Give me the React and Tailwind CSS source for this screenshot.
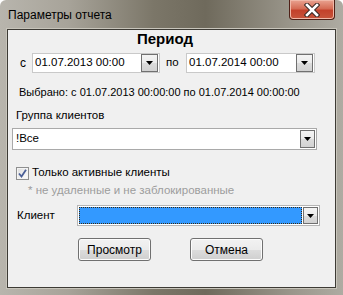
import React from 'react';

const font = { fontFamily: '"Liberation Sans", Arial, sans-serif' };

function DropButton({ className = '' }) {
  return (
    <div
      className={
        'flex items-center justify-center border border-[#707070] bg-[linear-gradient(180deg,#f4f4f4_0%,#ebebeb_50%,#dcdcdc_51%,#d2d2d2_100%)] ' +
        className
      }
    >
      <svg width="7" height="4" viewBox="0 0 7 4">
        <path d="M0 0H7L3.5 4Z" fill="#000" />
      </svg>
    </div>
  );
}

function DateCombo({ value, width }) {
  return (
    <div
      className="flex h-[20px] items-center border border-[#c9c9c9] bg-white pl-[1px] pr-[1px]"
      style={{ width }}
    >
      <span className="flex-1 pl-[1px] text-[11.5px] leading-none text-black">{value}</span>
      <DropButton className="h-[18px] w-[17px]" />
    </div>
  );
}

function WinButton({ children }) {
  return (
    <button className="flex h-[23px] w-[73px] items-center justify-center rounded-[3px] border border-[#707070] bg-[linear-gradient(180deg,#f2f2f2_0%,#ebebeb_50%,#dddddd_51%,#cfcfcf_100%)] text-[12px] text-black shadow-[inset_0_0_0_1px_#fcfcfc]">
      {children}
    </button>
  );
}

export default function App() {
  return (
    <div
      className="relative flex h-[295px] w-[343px] flex-col overflow-hidden rounded-t-[6px] bg-[linear-gradient(90deg,#b8b5ad_0%,#a7a399_20%,#7b7668_45%,#6f6a5c_60%,#9a968b_85%,#aeaba2_100%)]"
      style={font}
    >
      {/* title bar */}
      <div className="flex h-[29px] shrink-0 items-start">
        <div className="pl-[8px] pt-[8px] text-[12px] leading-[14px] text-black">Параметры отчета</div>
        <div className="flex-1" />
        <div className="mr-[8px] flex h-[20px] w-[46px] items-center justify-center rounded-b-[4px] border border-t-0 border-[#4f2017] bg-[linear-gradient(180deg,#e9a391_0%,#d56c55_45%,#c3412b_55%,#c7553c_100%)] shadow-[inset_0_0_0_1px_#f0b8a8]">
          <svg width="16" height="14" viewBox="0 0 16 14">
            <path d="M3 2L13 12M13 2L3 12" stroke="#3b2a26" strokeWidth="4.6" strokeLinecap="square" />
            <path d="M3 2L13 12M13 2L3 12" stroke="#ffffff" strokeWidth="2.6" strokeLinecap="square" />
          </svg>
        </div>
      </div>

      {/* client area */}
      <div className="ml-[7px] mr-[7px] h-[259px] border border-[#3d3b35] bg-[#f0f0f0] shadow-[0_0_0_1px_#c8c5bb]">
        <div className="flex h-[17px] items-center justify-center pr-[13px] text-[15px] font-bold leading-none text-black">
          Период
        </div>

        <div className="mt-[6px] flex h-[20px] items-center">
          <span className="ml-[12px] w-[12px] text-[12px] text-black">с</span>
          <DateCombo value="01.07.2013 00:00" width={128} />
          <span className="ml-[6px] w-[20px] text-[11.5px] text-black">по</span>
          <DateCombo value="01.07.2014 00:00" width={129} />
        </div>

        <div className="mt-[12px] flex h-[14px] items-center pl-[11px] text-[11px] text-black">
          Выбрано: с 01.07.2013 00:00:00 по 01.07.2014 00:00:00
        </div>

        <div className="mt-[10px] flex h-[14px] items-center pl-[8px] text-[11.5px] text-black">
          Группа клиентов
        </div>

        <div className="ml-[4px] mt-[5px] flex h-[22px] w-[305px] items-center border border-[#a9a9a9] bg-white pr-[1px]">
          <span className="flex-1 pl-[3px] text-[11.5px] leading-none text-black">!Все</span>
          <DropButton className="h-[18px] w-[15px]" />
        </div>

        <div className="mt-[16px] flex h-[14px] items-center pl-[8px]">
          <div className="flex h-[13px] w-[13px] items-center justify-center border border-[#8e8f8f] bg-[linear-gradient(135deg,#dcdcdc_0%,#ffffff_100%)] shadow-[inset_0_0_0_1px_#f4f4f4]">
            <svg width="9" height="9" viewBox="0 0 9 9">
              <path d="M1 4.5L3.5 7.5L8 0.8" stroke="#4a5f97" strokeWidth="1.8" fill="none" />
            </svg>
          </div>
          <span className="ml-[3px] text-[11.5px] text-black">Только активные клиенты</span>
        </div>

        <div className="mt-[4px] flex h-[14px] items-center pl-[20px] text-[11.5px] text-[#9d9d9d]">
          * не удаленные и не заблокированные
        </div>

        <div className="mt-[7px] flex h-[21px] items-center">
          <span className="ml-[9px] w-[60px] text-[11.5px] text-black">Клиент</span>
          <div className="flex h-[21px] w-[243px] items-center border border-[#b5b5b5] bg-white p-[1px]">
            <div className="h-full flex-1 border border-dotted border-[#3a2a10] bg-[#3399ff]" />
            <DropButton className="ml-[1px] h-[17px] w-[15px]" />
          </div>
        </div>

        <div className="mt-[12px] flex">
          <div className="ml-[70px]">
            <WinButton>Просмотр</WinButton>
          </div>
          <div className="ml-[39px]">
            <WinButton>Отмена</WinButton>
          </div>
        </div>
      </div>
    </div>
  );
}
